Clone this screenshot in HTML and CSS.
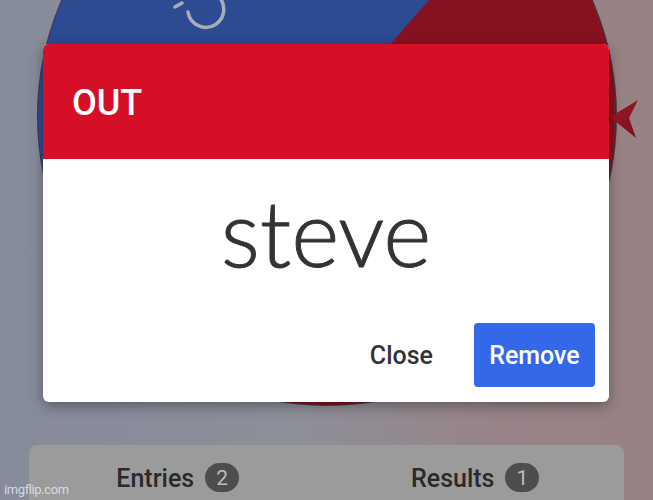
FILE: index.html
```html
<!DOCTYPE html>
<html>
<head>
<meta charset="utf-8">
<link rel="stylesheet" href="styles.css">
</head>
<body>
<div class="page">
  <svg class="wheel" width="653" height="445" viewBox="0 0 653 445">
    <defs>
      <clipPath id="wc"><circle cx="327" cy="116" r="289"/></clipPath>
      <linearGradient id="pg" x1="0" y1="0" x2="1" y2="1">
        <stop offset="0" stop-color="#a01a28"/>
        <stop offset="1" stop-color="#7a0f1b"/>
      </linearGradient>
    </defs>
    <circle cx="327" cy="116" r="290" fill="#3a3f52"/>
    <circle cx="327" cy="116" r="289" fill="#86121f"/>
    <polygon clip-path="url(#wc)" points="591,-184 63,416 -300,100 100,-400" fill="#2d4b93"/>
    <path d="M175 7 L182 3 M188 12 A18 18 0 1 0 215.6 -5.8" fill="none" stroke="#a9acb6" stroke-width="3.5" stroke-linecap="round"/>
    <polygon points="610,117 638,100 629,118 636,138" fill="url(#pg)"/>
  </svg>
  <div class="tabs">
    <div class="tab"><span class="tab-label">Entries</span><span class="badge">2</span></div>
    <div class="tab"><span class="tab-label">Results</span><span class="badge">1</span></div>
  </div>

  <div class="dialog">
    <div class="dialog-head">OUT</div>
    <div class="dialog-body">steve</div>
    <div class="dialog-foot">
      <button class="btn btn-text">Close</button>
      <button class="btn btn-primary">Remove</button>
    </div>
  </div>

  <div class="watermark">imgflip.com</div>
</div>
</body>
</html>
```
FILE: styles.css
```css
* { box-sizing: border-box; }
html, body { margin: 0; padding: 0; }
body { width: 653px; height: 500px; overflow: hidden; }

.page {
  position: relative;
  width: 653px;
  height: 500px;
  overflow: hidden;
  background: linear-gradient(90deg, #868b9b 0%, #8d8f99 45%, #978488 75%, #988184 100%);
  font-family: Roboto, "Liberation Sans", sans-serif;
}

.wheel { display: block; }

.tabs {
  display: flex;
  margin: 0 29px;
  height: 60px;
  background: #9b9b9b;
  border-radius: 8px 8px 0 0;
}
.tab {
  flex: 1;
  display: flex;
  justify-content: center;
  align-items: flex-start;
  padding-top: 17px;
  gap: 11px;
}
.tab-label {
  font-size: 25px;
  font-weight: 500;
  line-height: 30px;
  margin-top: 2px;
  color: #2a2a2a;
}
.badge {
  display: flex;
  align-items: center;
  justify-content: center;
  min-width: 34px;
  height: 29px;
  border-radius: 15px;
  background: #4d4d4d;
  color: #bcbcbc;
  font-size: 21px;
  margin-top: 1px;
}

.dialog {
  position: absolute;
  left: 43px;
  top: 44px;
  width: 566px;
  height: 358px;
  background: #fff;
  border-radius: 6px;
  overflow: hidden;
  box-shadow: 0 4px 14px rgba(0,0,0,0.35);
  display: flex;
  flex-direction: column;
}
.dialog-head {
  height: 115px;
  flex: none;
  background: #d50f25;
  color: #fff;
  font-size: 36px;
  font-weight: 500;
  display: flex;
  align-items: center;
  padding-left: 29px;
  padding-top: 2px;
}
.dialog-body {
  flex: 1;
  text-align: center;
  font-family: Lato, "Noto Sans", sans-serif;
  font-weight: 300;
  -webkit-text-stroke: 0.9px #333;
  font-size: 92px;
  line-height: 1;
  color: #333;
  padding-top: 27px;
}
.dialog-foot {
  flex: none;
  display: flex;
  justify-content: flex-end;
  align-items: center;
  gap: 26px;
  padding: 0 14px 15px 0;
}
.btn {
  font-family: Roboto, "Liberation Sans", sans-serif;
  font-size: 25px;
  font-weight: 500;
  border: none;
  border-radius: 4px;
  height: 64px;
  padding: 0 15px;
  background: transparent;
}
.btn-text { color: #333; }
.btn-primary {
  background: #3369e8;
  color: #fff;
  width: 121px;
  padding: 0;
}

.watermark {
  position: absolute;
  left: 4px;
  bottom: 3px;
  font-family: Roboto, "Liberation Sans", sans-serif;
  font-size: 13px;
  letter-spacing: -0.4px;
  color: rgba(230,230,235,0.85);
}
```
